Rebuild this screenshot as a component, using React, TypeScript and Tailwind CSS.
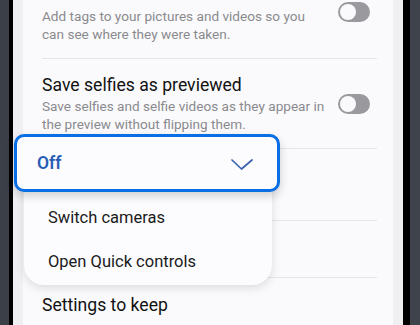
import React from "react";

function Toggle() {
  return (
    <div className="w-[32px] h-[20px] rounded-full bg-[#9a9a9e] flex items-center pl-[2px] shrink-0">
      <div className="w-[16px] h-[16px] rounded-full bg-[#fafafc]" />
    </div>
  );
}

export default function App() {
  return (
    <div
      className="w-[420px] h-[325px] relative overflow-hidden flex"
      style={{ fontFamily: "Roboto, 'Noto Sans', sans-serif" }}
    >
      <div className="w-[9px] bg-[#3a3f48]" />
      <div className="w-[4px] bg-black" />
      <div className="w-[10px] bg-[#f0f0f2]" />
      <div className="flex-1 bg-[#fafafc] flex flex-col pl-[19px] pr-[16px]">
        <div className="h-[58px] flex justify-between items-start">
          <div className="pt-[7px] text-[13.6px] leading-[18px] text-[#8a8a8e]">
            Add tags to your pictures and videos so you
            <br />
            can see where they were taken.
          </div>
          <div className="mt-[2px] mr-[7px]">
            <Toggle />
          </div>
        </div>
        <div className="h-px bg-[#e6e6e9]" />
        <div className="h-[89px] flex justify-between items-center">
          <div className="flex flex-col">
            <div className="text-[17.6px] leading-[22px] text-[#111]">Save selfies as previewed</div>
            <div className="text-[13.6px] leading-[18px] text-[#8a8a8e] mt-px">
              Save selfies and selfie videos as they appear in
              <br />
              the preview without flipping them.
            </div>
          </div>
          <div className="mr-[7px]">
            <Toggle />
          </div>
        </div>
        <div className="h-px bg-[#e6e6e9]" />
        <div className="h-[71px]" />
        <div className="h-px bg-[#e6e6e9]" />
        <div className="h-[56px]" />
        <div className="h-px bg-[#e6e6e9]" />
        <div className="pt-[16px] text-[17.6px] leading-[22px] text-[#111]">Settings to keep</div>
      </div>
      <div className="w-[10px] bg-[#f0f0f2]" />
      <div className="w-[7px] bg-black" />
      <div className="w-[10px] bg-[#3e434c]" />

      {/* popup menu */}
      <div className="absolute left-[24px] top-[150px] w-[248px] h-[135px] bg-[#fcfcfe] rounded-b-[20px] shadow-[0_3px_10px_rgba(0,0,0,0.12)] flex flex-col pt-[46px]">
        <div className="h-[46px] flex items-center pl-[24px] text-[16.5px] text-[#1a1a1a]">Switch cameras</div>
        <div className="h-[46px] flex items-center pl-[24px] text-[16.5px] text-[#1a1a1a]">Open Quick controls</div>
      </div>
      <div className="absolute left-[14px] top-[134px] w-[266px] h-[58px] bg-[#fcfcfe] border-[3px] border-[#0a6ee4] rounded-[10px] shadow-[0_4px_10px_rgba(0,0,0,0.18)] flex items-center justify-between pl-[20px] pr-[24px]">
        <span className="text-[17.5px] font-semibold text-[#2a5db6]">Off</span>
        <svg width="22" height="11" viewBox="0 0 22 11" fill="none" className="mt-[2px]">
          <path d="M1 1 L10.5 10 L21 1" stroke="#3a63ad" strokeWidth="1.7" strokeLinecap="round" strokeLinejoin="round" />
        </svg>
      </div>
    </div>
  );
}
